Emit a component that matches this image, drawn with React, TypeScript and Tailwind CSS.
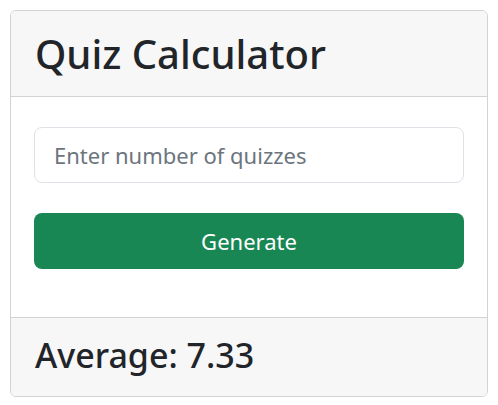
export default function App() {
  return (
    <div className="min-h-screen bg-white p-[10px]" style={{ fontFamily: "'Noto Sans', 'Open Sans', sans-serif" }}>
      <div className="w-[478px] overflow-hidden rounded-[6px] border border-[#d3d3d3] bg-white">
        {/* header */}
        <div className="flex h-[86px] items-center border-b border-[#d3d3d3] bg-[#f7f7f7] px-[24px]">
          <h1 className="text-[40px] font-medium leading-none text-[#212529]">Quiz Calculator</h1>
        </div>

        {/* body */}
        <div className="flex flex-col gap-[30px] px-[23px] pb-[48px] pt-[30px]">
          <input
            type="text"
            placeholder="Enter number of quizzes"
            className="h-[56px] w-full rounded-[8px] border border-[#dee2e6] bg-white px-[19px] text-[22px] text-[#212529] outline-none placeholder:text-[#6c757d]"
          />
          <button className="h-[56px] w-full rounded-[8px] bg-[#198754] text-[22px] text-white">
            Generate
          </button>
        </div>

        {/* footer */}
        <div className="flex h-[79px] items-center border-t border-[#d3d3d3] bg-[#f7f7f7] px-[24px] pb-[4px]">
          <h2 className="text-[34px] font-medium leading-none text-[#212529]">Average: 7.33</h2>
        </div>
      </div>
    </div>
  );
}
